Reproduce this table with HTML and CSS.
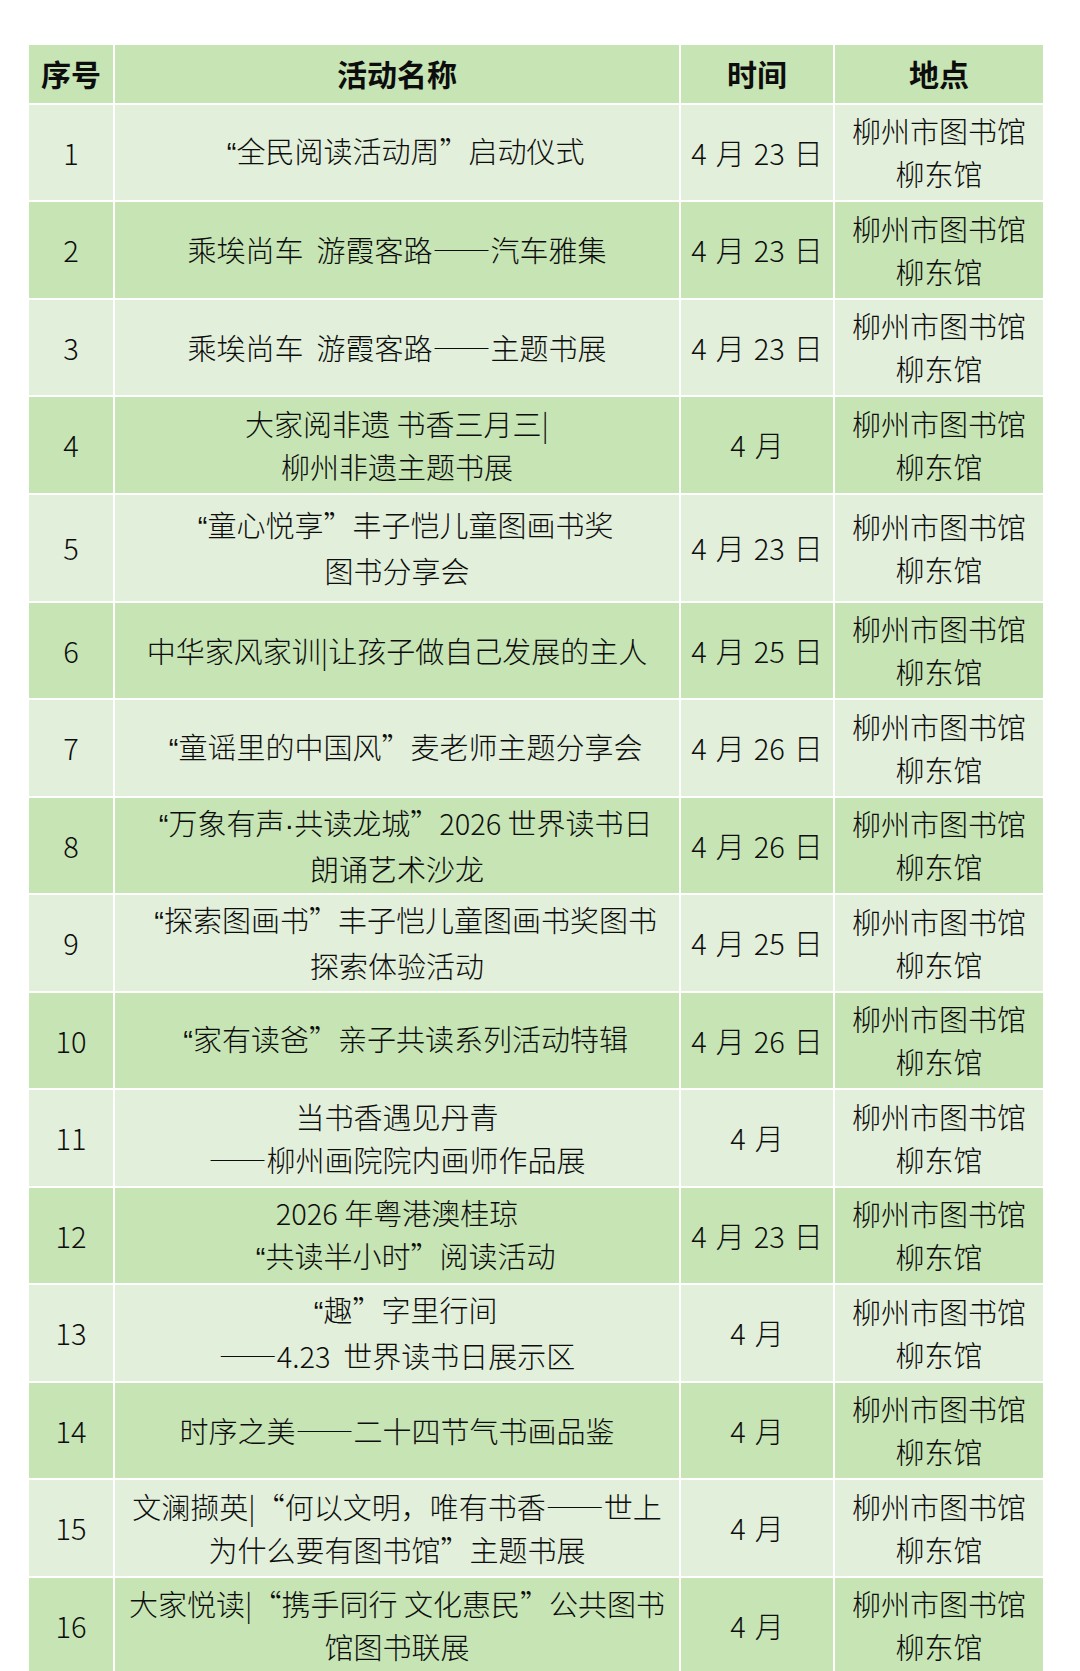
FILE: index.html
```html
<!DOCTYPE html>
<html lang="zh-CN">
<head>
<meta charset="utf-8">
<title>活动安排</title>
<link rel="stylesheet" href="styles.css">
</head>
<body>
<div class="page">
<table class="schedule">
  <colgroup>
    <col class="c-no"><col class="c-name"><col class="c-time"><col class="c-place">
  </colgroup>
  <thead>
    <tr class="head"><th>序号</th><th>活动名称</th><th>时间</th><th>地点</th></tr>
  </thead>
  <tbody>
    <tr class="light"><td>1</td><td><span class="oq">“</span>全民阅读活动周”启动仪式</td><td class="when">4 月 23 日</td><td>柳州市图书馆<br>柳东馆</td></tr>
    <tr class="dark"><td>2</td><td>乘埃尚车&nbsp;&nbsp;游霞客路——汽车雅集</td><td class="when">4 月 23 日</td><td>柳州市图书馆<br>柳东馆</td></tr>
    <tr class="light"><td>3</td><td>乘埃尚车&nbsp;&nbsp;游霞客路——主题书展</td><td class="when">4 月 23 日</td><td>柳州市图书馆<br>柳东馆</td></tr>
    <tr class="dark"><td>4</td><td>大家阅非遗 书香三月三|<br>柳州非遗主题书展</td><td class="when">4 月</td><td>柳州市图书馆<br>柳东馆</td></tr>
    <tr class="light tall"><td>5</td><td><span class="oq">“</span>童心悦享”丰子恺儿童图画书奖<br>图书分享会</td><td class="when">4 月 23 日</td><td>柳州市图书馆<br>柳东馆</td></tr>
    <tr class="dark"><td>6</td><td>中华家风家训|让孩子做自己发展的主人</td><td class="when">4 月 25 日</td><td>柳州市图书馆<br>柳东馆</td></tr>
    <tr class="light"><td>7</td><td><span class="oq">“</span>童谣里的中国风”麦老师主题分享会</td><td class="when">4 月 26 日</td><td>柳州市图书馆<br>柳东馆</td></tr>
    <tr class="dark"><td>8</td><td><span class="oq">“</span>万象有声<span class="lat">·</span>共读龙城”2026 世界读书日<br>朗诵艺术沙龙</td><td class="when">4 月 26 日</td><td>柳州市图书馆<br>柳东馆</td></tr>
    <tr class="light"><td>9</td><td><span class="oq">“</span>探索图画书”丰子恺儿童图画书奖图书<br>探索体验活动</td><td class="when">4 月 25 日</td><td>柳州市图书馆<br>柳东馆</td></tr>
    <tr class="dark"><td>10</td><td><span class="oq">“</span>家有读爸”亲子共读系列活动特辑</td><td class="when">4 月 26 日</td><td>柳州市图书馆<br>柳东馆</td></tr>
    <tr class="light"><td>11</td><td>当书香遇见丹青<br>——柳州画院院内画师作品展</td><td class="when">4 月</td><td>柳州市图书馆<br>柳东馆</td></tr>
    <tr class="dark"><td>12</td><td>2026 年粤港澳桂琼<br><span class="oq">“</span>共读半小时”阅读活动</td><td class="when">4 月 23 日</td><td>柳州市图书馆<br>柳东馆</td></tr>
    <tr class="light"><td>13</td><td><span class="oq">“</span>趣”字里行间<br>——4.23&nbsp;&nbsp;世界读书日展示区</td><td class="when">4 月</td><td>柳州市图书馆<br>柳东馆</td></tr>
    <tr class="dark"><td>14</td><td>时序之美——二十四节气书画品鉴</td><td class="when">4 月</td><td>柳州市图书馆<br>柳东馆</td></tr>
    <tr class="light"><td>15</td><td>文澜撷英|“何以文明，唯有书香——世上<br>为什么要有图书馆”主题书展</td><td class="when">4 月</td><td>柳州市图书馆<br>柳东馆</td></tr>
    <tr class="dark"><td>16</td><td>大家悦读|“携手同行 文化惠民”公共图书<br>馆图书联展</td><td class="when">4 月</td><td>柳州市图书馆<br>柳东馆</td></tr>
  </tbody>
</table>
</div>
</body>
</html>
```

FILE: styles.css
```css
html, body {
  margin: 0;
  padding: 0;
  background: #ffffff;
}

.page {
  padding: 43px 0 0 27px;
}

.schedule {
  table-layout: fixed;
  border-collapse: collapse;
  width: 1016px;
  font-family: "Noto Sans CJK SC", "Noto Sans", sans-serif;
  font-size: 29px;
  font-weight: 300;
  line-height: 43px;
  color: #0d0d0d;
}

.c-no { width: 86px; }
.c-name { width: 566px; }
.c-time { width: 154px; }
.c-place { width: 210px; }

.schedule th,
.schedule td {
  border: 2px solid #ffffff;
  text-align: center;
  vertical-align: middle;
  padding: 0;
  white-space: nowrap;
}

.schedule th {
  font-weight: 700;
  font-size: 30px;
  height: 57.5px;
  background: #c6e4b4;
}

.schedule .lat,
.schedule .oq {
  font-family: "Liberation Sans", sans-serif;
  font-weight: 400;
}

.schedule .oq {
  padding-left: 0.6em;
}

.schedule .when {
  word-spacing: 2.5px;
}

.schedule tr.light td { background: #e2efda; }
.schedule tr.dark td { background: #c6e4b4; }

.schedule tbody tr { height: 97.5px; }
.schedule tbody tr.tall { height: 108px; }
```
